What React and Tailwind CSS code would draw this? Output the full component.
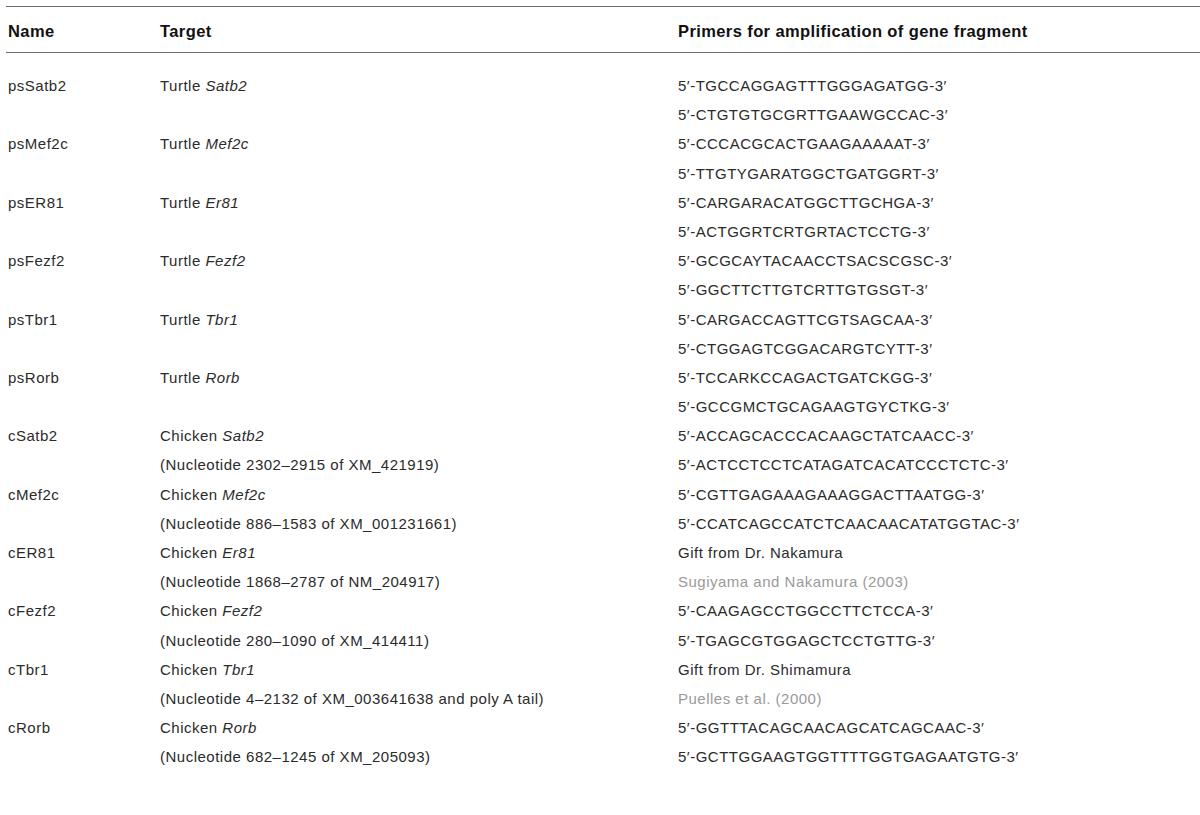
const ROWS = [
  { name: 'psSatb2', target: [['Turtle ', 'Satb2']], primers: ['5′-TGCCAGGAGTTTGGGAGATGG-3′', '5′-CTGTGTGCGRTTGAAWGCCAC-3′'] },
  { name: 'psMef2c', target: [['Turtle ', 'Mef2c']], primers: ['5′-CCCACGCACTGAAGAAAAAT-3′', '5′-TTGTYGARATGGCTGATGGRT-3′'] },
  { name: 'psER81', target: [['Turtle ', 'Er81']], primers: ['5′-CARGARACATGGCTTGCHGA-3′', '5′-ACTGGRTCRTGRTACTCCTG-3′'] },
  { name: 'psFezf2', target: [['Turtle ', 'Fezf2']], primers: ['5′-GCGCAYTACAACCTSACSCGSC-3′', '5′-GGCTTCTTGTCRTTGTGSGT-3′'] },
  { name: 'psTbr1', target: [['Turtle ', 'Tbr1']], primers: ['5′-CARGACCAGTTCGTSAGCAA-3′', '5′-CTGGAGTCGGACARGTCYTT-3′'] },
  { name: 'psRorb', target: [['Turtle ', 'Rorb']], primers: ['5′-TCCARKCCAGACTGATCKGG-3′', '5′-GCCGMCTGCAGAAGTGYCTKG-3′'] },
  { name: 'cSatb2', target: [['Chicken ', 'Satb2'], ['(Nucleotide 2302–2915 of XM_421919)']], primers: ['5′-ACCAGCACCCACAAGCTATCAACC-3′', '5′-ACTCCTCCTCATAGATCACATCCCTCTC-3′'] },
  { name: 'cMef2c', target: [['Chicken ', 'Mef2c'], ['(Nucleotide 886–1583 of XM_001231661)']], primers: ['5′-CGTTGAGAAAGAAAGGACTTAATGG-3′', '5′-CCATCAGCCATCTCAACAACATATGGTAC-3′'] },
  { name: 'cER81', target: [['Chicken ', 'Er81'], ['(Nucleotide 1868–2787 of NM_204917)']], primers: ['Gift from Dr. Nakamura', { cite: 'Sugiyama and Nakamura (2003)' }] },
  { name: 'cFezf2', target: [['Chicken ', 'Fezf2'], ['(Nucleotide 280–1090 of XM_414411)']], primers: ['5′-CAAGAGCCTGGCCTTCTCCA-3′', '5′-TGAGCGTGGAGCTCCTGTTG-3′'] },
  { name: 'cTbr1', target: [['Chicken ', 'Tbr1'], ['(Nucleotide 4–2132 of XM_003641638 and poly A tail)']], primers: ['Gift from Dr. Shimamura', { cite: 'Puelles et al. (2000)' }] },
  { name: 'cRorb', target: [['Chicken ', 'Rorb'], ['(Nucleotide 682–1245 of XM_205093)']], primers: ['5′-GGTTTACAGCAACAGCATCAGCAAC-3′', '5′-GCTTGGAAGTGGTTTTGGTGAGAATGTG-3′'] },
];

function Line({ children, className = '' }) {
  return <div className={`h-[29.2px] leading-[29.2px] whitespace-nowrap ${className}`}>{children}</div>;
}

export default function App() {
  return (
    <div className="min-h-[815px] bg-white pt-[6px] pl-[6px] text-[15px] tracking-[0.5px] text-[#2b2b2b]" style={{ fontFamily: '"Liberation Sans", Arial, sans-serif' }}>
      <div className="border-t border-[#6b6b6b]">
        {/* header */}
        <div className="grid grid-cols-[152px_518px_1fr] border-b border-[#6b6b6b] pl-[2px] pt-[12px] pb-[9px] text-[16.5px] font-bold tracking-[0.4px] text-[#111]">
          <div className="leading-[24px]">Name</div>
          <div className="leading-[24px]">Target</div>
          <div className="leading-[24px]">Primers for amplification of gene fragment</div>
        </div>

        <div className="pt-[18px] pl-[2px]">
          {ROWS.map((r) => (
            <div key={r.name} className="grid grid-cols-[152px_518px_1fr]">
              <div>
                <Line>{r.name}</Line>
              </div>
              <div>
                {r.target.map((t, i) => (
                  <Line key={i}>
                    {t[0]}
                    {t[1] && <i>{t[1]}</i>}
                  </Line>
                ))}
              </div>
              <div>
                {r.primers.map((p, i) =>
                  typeof p === 'string' ? (
                    <Line key={i}>{p}</Line>
                  ) : (
                    <Line key={i} className="text-[#9a9a9a]">{p.cite}</Line>
                  )
                )}
              </div>
            </div>
          ))}
        </div>
      </div>
    </div>
  );
}
